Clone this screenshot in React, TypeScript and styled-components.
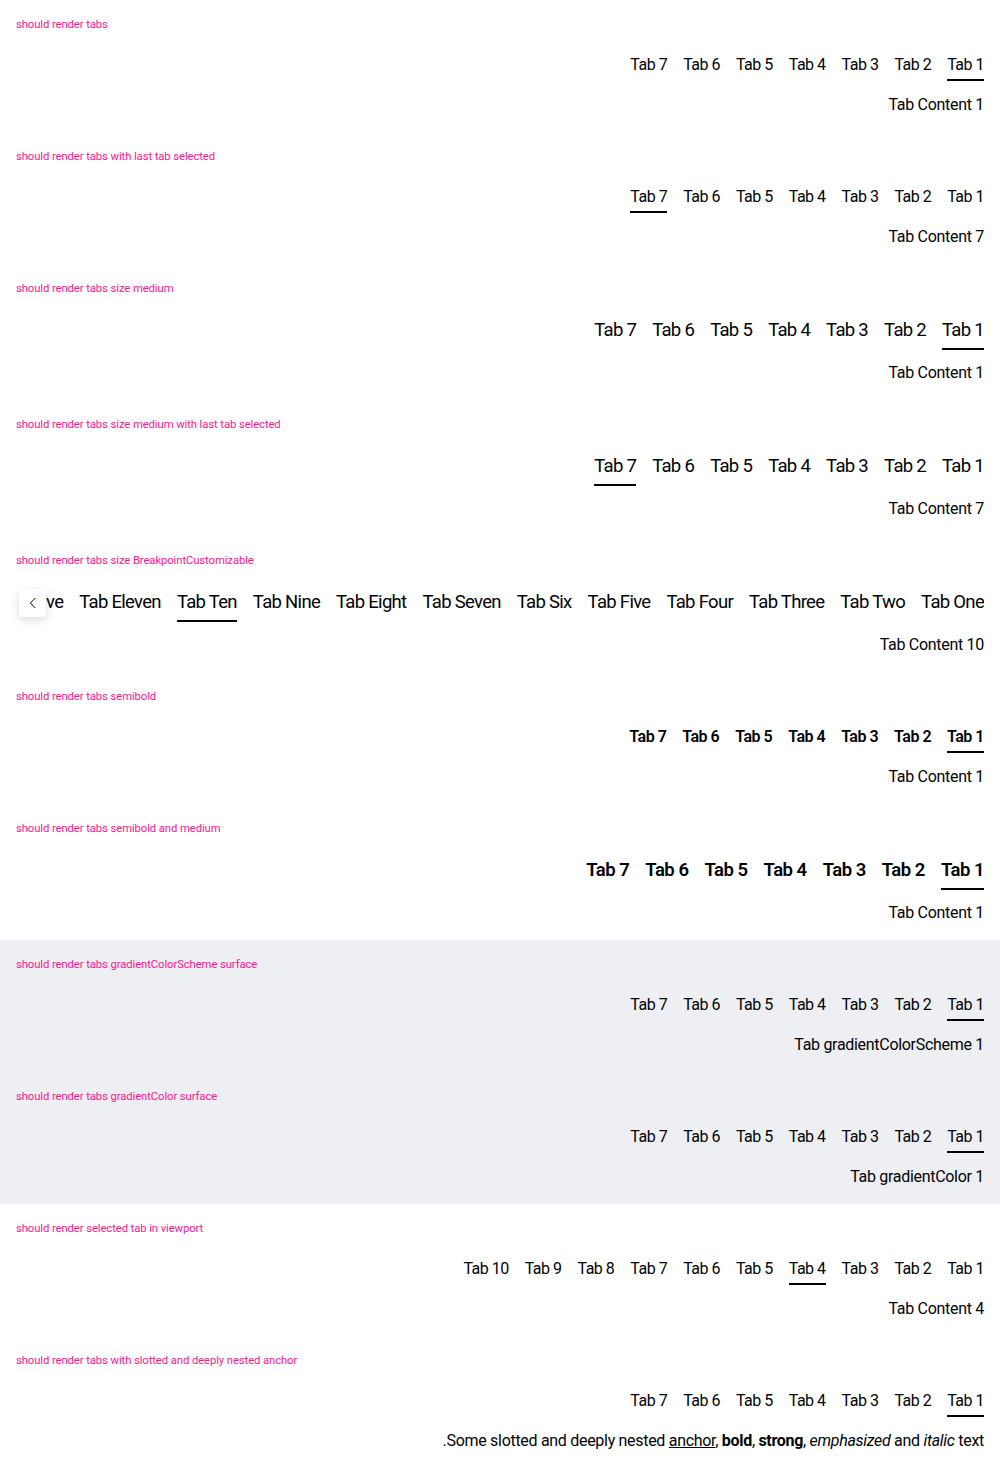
import React from "react";
import styled, { createGlobalStyle } from "styled-components";

type Size = "small" | "medium";
type Weight = "regular" | "semibold";

interface Story {
  id: string;
  title: string;
  tabs: string[];
  selected: number;
  size?: Size;
  weight?: Weight;
  surface?: boolean;
  scroll?: boolean;
  content: React.ReactNode;
}

const seven = ["Tab 1", "Tab 2", "Tab 3", "Tab 4", "Tab 5", "Tab 6", "Tab 7"];
const ten = [...seven, "Tab 8", "Tab 9", "Tab 10"];
const words = [
  "Tab One",
  "Tab Two",
  "Tab Three",
  "Tab Four",
  "Tab Five",
  "Tab Six",
  "Tab Seven",
  "Tab Eight",
  "Tab Nine",
  "Tab Ten",
  "Tab Eleven",
  "Tab Twelve",
];

const STORIES: Story[] = [
  { id: "a", title: "should render tabs", tabs: seven, selected: 0, content: "Tab Content 1" },
  {
    id: "b",
    title: "should render tabs with last tab selected",
    tabs: seven,
    selected: 6,
    content: "Tab Content 7",
  },
  {
    id: "c",
    title: "should render tabs size medium",
    tabs: seven,
    selected: 0,
    size: "medium",
    content: "Tab Content 1",
  },
  {
    id: "d",
    title: "should render tabs size medium with last tab selected",
    tabs: seven,
    selected: 6,
    size: "medium",
    content: "Tab Content 7",
  },
  {
    id: "e",
    title: "should render tabs size BreakpointCustomizable",
    tabs: words,
    selected: 9,
    size: "medium",
    scroll: true,
    content: "Tab Content 10",
  },
  {
    id: "f",
    title: "should render tabs semibold",
    tabs: seven,
    selected: 0,
    weight: "semibold",
    content: "Tab Content 1",
  },
  {
    id: "g",
    title: "should render tabs semibold and medium",
    tabs: seven,
    selected: 0,
    size: "medium",
    weight: "semibold",
    content: "Tab Content 1",
  },
  {
    id: "h",
    title: "should render tabs gradientColorScheme surface",
    tabs: seven,
    selected: 0,
    surface: true,
    content: "Tab gradientColorScheme 1",
  },
  {
    id: "i",
    title: "should render tabs gradientColor surface",
    tabs: seven,
    selected: 0,
    surface: true,
    content: "Tab gradientColor 1",
  },
  {
    id: "j",
    title: "should render selected tab in viewport",
    tabs: ten,
    selected: 3,
    content: "Tab Content 4",
  },
  {
    id: "k",
    title: "should render tabs with slotted and deeply nested anchor",
    tabs: seven,
    selected: 0,
    content: (
      <>
        Some slotted and deeply nested <a href="#">anchor</a>, <b>bold</b>,{" "}
        <strong>strong</strong>, <em>emphasized</em> and <i>italic</i> text.
      </>
    ),
  },
];

function ChevronLeft() {
  return (
    <svg width="16" height="16" viewBox="0 0 24 24" fill="none">
      <polyline
        points="15 5 8 12 15 19"
        stroke="#010205"
        strokeWidth="1.5"
        strokeLinecap="round"
        strokeLinejoin="round"
      />
    </svg>
  );
}

function Tabs({ story }: { story: Story }) {
  const size = story.size ?? "small";
  const weight = story.weight ?? "regular";
  return (
    <TabsWrap dir="rtl">
      <BarViewport>
        <TabBar>
          {story.tabs.map((label, i) => (
            <TabButton
              key={label}
              $size={size}
              $weight={weight}
              $active={i === story.selected}
            >
              {label}
            </TabButton>
          ))}
        </TabBar>
        {story.scroll && (
          <ScrollOverlay>
            <ScrollButton>
              <ChevronLeft />
            </ScrollButton>
          </ScrollOverlay>
        )}
      </BarViewport>
      <Panel $size={size}>{story.content}</Panel>
    </TabsWrap>
  );
}

export default function App() {
  return (
    <>
      <GlobalStyle />
      <Page>
        {STORIES.map((story) => (
          <Playground key={story.id} $surface={!!story.surface}>
            <Title>{story.title}</Title>
            <Tabs story={story} />
          </Playground>
        ))}
      </Page>
    </>
  );
}

const GlobalStyle = createGlobalStyle`
  * { box-sizing: border-box; }
  body {
    margin: 0;
    background: #fff;
    font-family: Roboto, "Noto Sans", sans-serif;
    color: #010205;
  }
`;

const Page = styled.main`
  display: flex;
  flex-direction: column;
  width: 100%;
`;

const Playground = styled.section<{ $surface: boolean }>`
  padding: 16px 16px 15px;
  background: ${(p) => (p.$surface ? "#eeeff2" : "#fff")};
`;

const Title = styled.p`
  margin: 0 0 15px;
  font-size: 11.3px;
  line-height: 17px;
  color: #ff1493;
  letter-spacing: -0.1px;
`;

const TabsWrap = styled.div`
  display: flex;
  flex-direction: column;
`;

const BarViewport = styled.div`
  position: relative;
`;

const TabBar = styled.div`
  display: flex;
  gap: 16px;
  justify-content: flex-start;
  overflow: hidden;
`;

const TabButton = styled.button<{ $size: Size; $weight: Weight; $active: boolean }>`
  flex: none;
  margin: 0;
  padding: ${(p) => (p.$size === "medium" ? "4px 0 4px" : "5px 0 2px")};
  border: 0;
  border-bottom: 2px solid ${(p) => (p.$active ? "#010205" : "transparent")};
  background: none;
  font-family: Roboto, "Noto Sans", sans-serif;
  font-size: ${(p) => (p.$size === "medium" ? "18.5px" : "16px")};
  line-height: ${(p) => (p.$size === "medium" ? "28px" : "24px")};
  font-weight: ${(p) => (p.$weight === "semibold" ? 600 : 400)};
  letter-spacing: ${(p) =>
    p.$size === "medium" ? (p.$weight === "semibold" ? "-0.5px" : "-0.7px") : "-0.5px"};
  color: #010205;
  white-space: nowrap;
  cursor: pointer;
`;

const ScrollOverlay = styled.div`
  position: absolute;
  top: 0;
  bottom: 0;
  left: 0;
  width: 30px;
  display: flex;
  align-items: center;
  background: #fff;
`;

const ScrollButton = styled.button`
  display: flex;
  align-items: center;
  justify-content: center;
  width: 28px;
  height: 28px;
  margin: 0 0 0 3px;
  padding: 0;
  border: 0;
  border-radius: 4px;
  background: #fff;
  box-shadow: 0 3px 8px rgba(0, 0, 0, 0.15);
  cursor: pointer;
`;

const Panel = styled.div<{ $size: Size }>`
  margin-top: ${(p) => (p.$size === "medium" ? "11px" : "12px")};
  font-size: 16px;
  line-height: 24px;
  letter-spacing: -0.3px;
  color: #010205;

  a {
    color: inherit;
  }
`;
